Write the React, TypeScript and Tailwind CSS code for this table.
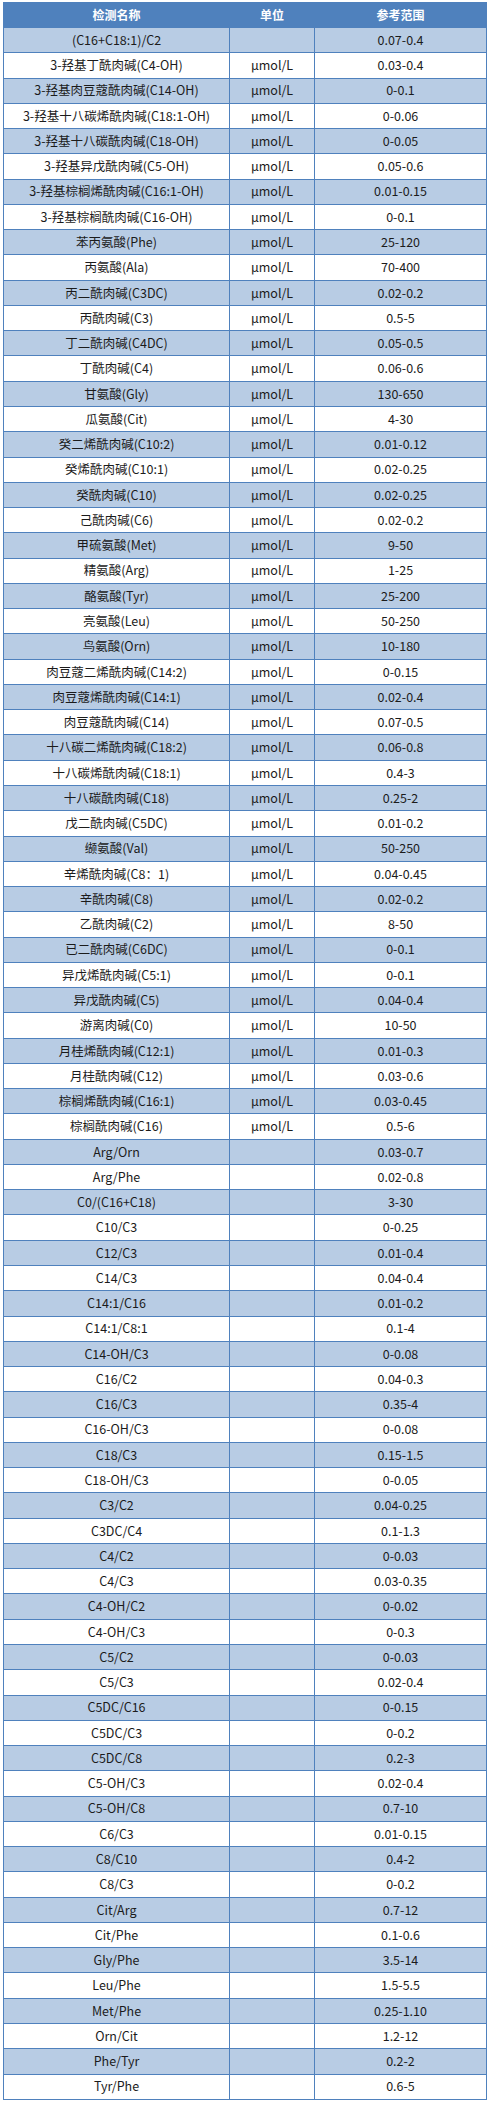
type Row = [name: string, unit: string, range: string]

const U = 'μmol/L'

const rows: Row[] = [
  ['(C16+C18:1)/C2', '', '0.07-0.4'],
  ['3-羟基丁酰肉碱(C4-OH)', U, '0.03-0.4'],
  ['3-羟基肉豆蔻酰肉碱(C14-OH)', U, '0-0.1'],
  ['3-羟基十八碳烯酰肉碱(C18:1-OH)', U, '0-0.06'],
  ['3-羟基十八碳酰肉碱(C18-OH)', U, '0-0.05'],
  ['3-羟基异戊酰肉碱(C5-OH)', U, '0.05-0.6'],
  ['3-羟基棕榈烯酰肉碱(C16:1-OH)', U, '0.01-0.15'],
  ['3-羟基棕榈酰肉碱(C16-OH)', U, '0-0.1'],
  ['苯丙氨酸(Phe)', U, '25-120'],
  ['丙氨酸(Ala)', U, '70-400'],
  ['丙二酰肉碱(C3DC)', U, '0.02-0.2'],
  ['丙酰肉碱(C3)', U, '0.5-5'],
  ['丁二酰肉碱(C4DC)', U, '0.05-0.5'],
  ['丁酰肉碱(C4)', U, '0.06-0.6'],
  ['甘氨酸(Gly)', U, '130-650'],
  ['瓜氨酸(Cit)', U, '4-30'],
  ['癸二烯酰肉碱(C10:2)', U, '0.01-0.12'],
  ['癸烯酰肉碱(C10:1)', U, '0.02-0.25'],
  ['癸酰肉碱(C10)', U, '0.02-0.25'],
  ['己酰肉碱(C6)', U, '0.02-0.2'],
  ['甲硫氨酸(Met)', U, '9-50'],
  ['精氨酸(Arg)', U, '1-25'],
  ['酪氨酸(Tyr)', U, '25-200'],
  ['亮氨酸(Leu)', U, '50-250'],
  ['鸟氨酸(Orn)', U, '10-180'],
  ['肉豆蔻二烯酰肉碱(C14:2)', U, '0-0.15'],
  ['肉豆蔻烯酰肉碱(C14:1)', U, '0.02-0.4'],
  ['肉豆蔻酰肉碱(C14)', U, '0.07-0.5'],
  ['十八碳二烯酰肉碱(C18:2)', U, '0.06-0.8'],
  ['十八碳烯酰肉碱(C18:1)', U, '0.4-3'],
  ['十八碳酰肉碱(C18)', U, '0.25-2'],
  ['戊二酰肉碱(C5DC)', U, '0.01-0.2'],
  ['缬氨酸(Val)', U, '50-250'],
  ['辛烯酰肉碱(C8：1)', U, '0.04-0.45'],
  ['辛酰肉碱(C8)', U, '0.02-0.2'],
  ['乙酰肉碱(C2)', U, '8-50'],
  ['已二酰肉碱(C6DC)', U, '0-0.1'],
  ['异戊烯酰肉碱(C5:1)', U, '0-0.1'],
  ['异戊酰肉碱(C5)', U, '0.04-0.4'],
  ['游离肉碱(C0)', U, '10-50'],
  ['月桂烯酰肉碱(C12:1)', U, '0.01-0.3'],
  ['月桂酰肉碱(C12)', U, '0.03-0.6'],
  ['棕榈烯酰肉碱(C16:1)', U, '0.03-0.45'],
  ['棕榈酰肉碱(C16)', U, '0.5-6'],
  ['Arg/Orn', '', '0.03-0.7'],
  ['Arg/Phe', '', '0.02-0.8'],
  ['C0/(C16+C18)', '', '3-30'],
  ['C10/C3', '', '0-0.25'],
  ['C12/C3', '', '0.01-0.4'],
  ['C14/C3', '', '0.04-0.4'],
  ['C14:1/C16', '', '0.01-0.2'],
  ['C14:1/C8:1', '', '0.1-4'],
  ['C14-OH/C3', '', '0-0.08'],
  ['C16/C2', '', '0.04-0.3'],
  ['C16/C3', '', '0.35-4'],
  ['C16-OH/C3', '', '0-0.08'],
  ['C18/C3', '', '0.15-1.5'],
  ['C18-OH/C3', '', '0-0.05'],
  ['C3/C2', '', '0.04-0.25'],
  ['C3DC/C4', '', '0.1-1.3'],
  ['C4/C2', '', '0-0.03'],
  ['C4/C3', '', '0.03-0.35'],
  ['C4-OH/C2', '', '0-0.02'],
  ['C4-OH/C3', '', '0-0.3'],
  ['C5/C2', '', '0-0.03'],
  ['C5/C3', '', '0.02-0.4'],
  ['C5DC/C16', '', '0-0.15'],
  ['C5DC/C3', '', '0-0.2'],
  ['C5DC/C8', '', '0.2-3'],
  ['C5-OH/C3', '', '0.02-0.4'],
  ['C5-OH/C8', '', '0.7-10'],
  ['C6/C3', '', '0.01-0.15'],
  ['C8/C10', '', '0.4-2'],
  ['C8/C3', '', '0-0.2'],
  ['Cit/Arg', '', '0.7-12'],
  ['Cit/Phe', '', '0.1-0.6'],
  ['Gly/Phe', '', '3.5-14'],
  ['Leu/Phe', '', '1.5-5.5'],
  ['Met/Phe', '', '0.25-1.10'],
  ['Orn/Cit', '', '1.2-12'],
  ['Phe/Tyr', '', '0.2-2'],
  ['Tyr/Phe', '', '0.6-5'],
]

const cell = 'border border-[#4f81bd] p-0 text-center align-middle'

export default function App() {
  return (
    <div
      className="bg-white pt-[2px] pl-[3px] pb-[3px]"
      style={{ fontFamily: '"Noto Sans CJK SC", "Open Sans", sans-serif' }}
    >
      <table className="border-collapse table-fixed w-[483px] text-[12.5px] leading-none text-[#1b1b1b]">
        <colgroup>
          <col className="w-[226px]" />
          <col className="w-[85px]" />
          <col className="w-[172px]" />
        </colgroup>
        <thead>
          <tr className="h-[25px] bg-[#4f81bd] text-white font-bold text-[12px]">
            <th className={cell}>检测名称</th>
            <th className={cell}>单位</th>
            <th className={cell}>参考范围</th>
          </tr>
        </thead>
        <tbody>
          {rows.map(([name, unit, range], i) => (
            <tr key={name} className={i % 2 === 0 ? 'h-[25.27px] bg-[#b8cce4]' : 'h-[25.27px] bg-white'}>
              <td className={cell}>{name}</td>
              <td className={cell}>{unit}</td>
              <td className={cell}>{range}</td>
            </tr>
          ))}
        </tbody>
      </table>
    </div>
  )
}
